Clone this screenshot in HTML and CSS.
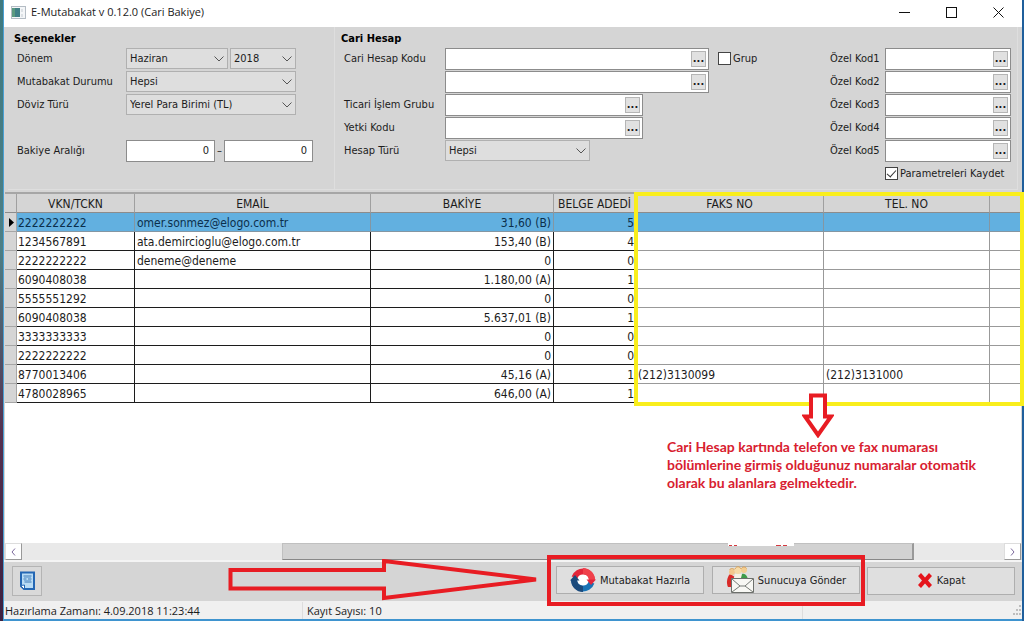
FILE: index.html
```html
<!DOCTYPE html>
<html lang="tr">
<head>
<meta charset="utf-8">
<title>E-Mutabakat v 0.12.0 (Cari Bakiye)</title>
<link rel="stylesheet" href="styles.css">
</head>
<body>
<div class="window">
  <header class="titlebar">
    <svg class="app-icon" width="15" height="13" viewBox="0 0 15 13"><rect x=".5" y=".5" width="14" height="12" fill="#f4f6f8" stroke="#b4bcc4"/><rect x="1" y="2" width="8" height="9" fill="#3f7f86"/><rect x="1" y="2" width="3" height="9" fill="#5b9a80"/><path d="M11 3v3M11 8v3" stroke="#c3cad0"/></svg>
    <h1 class="title">E-Mutabakat v 0.12.0 (Cari Bakiye)</h1>
    <div class="window-buttons">
      <button type="button" aria-label="Simge durumuna küçült"><svg width="11" height="11" viewBox="0 0 11 11"><path d="M0 5.5h11" stroke="#111" fill="none"/></svg></button>
      <button type="button" aria-label="Ekranı kapla"><svg width="11" height="11" viewBox="0 0 11 11"><rect x=".5" y=".5" width="10" height="10" stroke="#111" fill="none"/></svg></button>
      <button type="button" aria-label="Pencereyi kapat"><svg width="11" height="11" viewBox="0 0 11 11"><path d="M.5.5l10 10M10.500.5l-10 10" stroke="#111" fill="none"/></svg></button>
    </div>
  </header>

  <form class="params">
    <section class="group options">
      <h2>Seçenekler</h2>
      <div class="rows">
        <label for="month">Dönem</label>
        <div class="field">
          <span class="combo month"><select id="month"><option>Haziran</option></select><svg class="chevron" width="10" height="6" viewBox="0 0 10 6"><path d="M.5.5L5 5 9.500.5"/></svg></span>
          <span class="combo year"><select aria-label="Yıl"><option>2018</option></select><svg class="chevron" width="10" height="6" viewBox="0 0 10 6"><path d="M.5.5L5 5 9.500.5"/></svg></span>
        </div>
        <label for="state">Mutabakat Durumu</label>
        <div class="field"><span class="combo wide"><select id="state"><option>Hepsi</option></select><svg class="chevron" width="10" height="6" viewBox="0 0 10 6"><path d="M.5.5L5 5 9.500.5"/></svg></span></div>
        <label for="currency">Döviz Türü</label>
        <div class="field"><span class="combo wide"><select id="currency"><option>Yerel Para Birimi (TL)</option></select><svg class="chevron" width="10" height="6" viewBox="0 0 10 6"><path d="M.5.5L5 5 9.500.5"/></svg></span></div>
        <label class="last-row" for="min">Bakiye Aralığı</label>
        <div class="field last-row range"><input id="min" type="text" value="0"><span>–</span><input aria-label="Bakiye üst sınırı" type="text" value="0"></div>
      </div>
    </section>

    <section class="group account">
      <h2>Cari Hesap</h2>
      <div class="columns">
        <div class="rows">
          <label for="code">Cari Hesap Kodu</label>
          <div class="field"><span class="lookup long"><input id="code" type="text"><button type="button" aria-label="Kod seç">...</button></span><label class="check group-check"><input type="checkbox">Grup</label></div>
          <span></span>
          <div class="field"><span class="lookup long"><input aria-label="Cari Hesap Kodu bitiş" type="text"><button type="button" aria-label="Bitiş kodu seç">...</button></span></div>
          <label for="trade">Ticari İşlem Grubu</label>
          <div class="field"><span class="lookup medium"><input id="trade" type="text"><button type="button" aria-label="İşlem grubu seç">...</button></span></div>
          <label for="auth">Yetki Kodu</label>
          <div class="field"><span class="lookup medium"><input id="auth" type="text"><button type="button" aria-label="Yetki kodu seç">...</button></span></div>
          <label for="type">Hesap Türü</label>
          <div class="field"><span class="combo type"><select id="type"><option>Hepsi</option></select><svg class="chevron" width="10" height="6" viewBox="0 0 10 6"><path d="M.5.5L5 5 9.500.5"/></svg></span></div>
        </div>
        <div class="rows special">
          <label for="k1">Özel Kod1</label><div class="field"><span class="lookup short"><input id="k1" type="text"><button type="button" aria-label="Özel Kod1 seç">...</button></span></div>
          <label for="k2">Özel Kod2</label><div class="field"><span class="lookup short"><input id="k2" type="text"><button type="button" aria-label="Özel Kod2 seç">...</button></span></div>
          <label for="k3">Özel Kod3</label><div class="field"><span class="lookup short"><input id="k3" type="text"><button type="button" aria-label="Özel Kod3 seç">...</button></span></div>
          <label for="k4">Özel Kod4</label><div class="field"><span class="lookup short"><input id="k4" type="text"><button type="button" aria-label="Özel Kod4 seç">...</button></span></div>
          <label for="k5">Özel Kod5</label><div class="field"><span class="lookup short"><input id="k5" type="text"><button type="button" aria-label="Özel Kod5 seç">...</button></span></div>
          <span></span><label class="check"><input type="checkbox" checked>Parametreleri Kaydet</label>
        </div>
      </div>
    </section>
  </form>

  <main class="grid-area">
    <div class="table-wrap">
      <table>
        <colgroup><col class="c-mark"><col class="c-vkn"><col class="c-mail"><col class="c-bal"><col class="c-doc"><col class="c-fax"><col class="c-tel"><col></colgroup>
        <thead><tr><th></th><th>VKN/TCKN</th><th>EMAİL</th><th>BAKİYE</th><th class="tight">BELGE ADEDİ</th><th>FAKS NO</th><th>TEL. NO</th><th></th></tr></thead>
        <tbody>
          <tr class="selected"><td><svg class="marker" width="5" height="9" viewBox="0 0 5 9"><path d="M0 0l5 4.500-5 4.500z"/></svg></td><td>2222222222</td><td>omer.sonmez@elogo.com.tr</td><td>31,60 (B)</td><td>5</td><td></td><td></td><td></td></tr>
          <tr><td></td><td>1234567891</td><td>ata.demircioglu@elogo.com.tr</td><td>153,40 (B)</td><td>4</td><td></td><td></td><td></td></tr>
          <tr><td></td><td>2222222222</td><td>deneme@deneme</td><td>0</td><td>0</td><td></td><td></td><td></td></tr>
          <tr><td></td><td>6090408038</td><td></td><td>1.180,00 (A)</td><td>1</td><td></td><td></td><td></td></tr>
          <tr><td></td><td>5555551292</td><td></td><td>0</td><td>0</td><td></td><td></td><td></td></tr>
          <tr><td></td><td>6090408038</td><td></td><td>5.637,01 (B)</td><td>1</td><td></td><td></td><td></td></tr>
          <tr><td></td><td>3333333333</td><td></td><td>0</td><td>0</td><td></td><td></td><td></td></tr>
          <tr><td></td><td>2222222222</td><td></td><td>0</td><td>0</td><td></td><td></td><td></td></tr>
          <tr><td></td><td>8770013406</td><td></td><td>45,16 (A)</td><td>1</td><td>(212)3130099</td><td>(212)3131000</td><td></td></tr>
          <tr><td></td><td>4780028965</td><td></td><td>646,00 (A)</td><td>1</td><td></td><td></td><td></td></tr>
        </tbody>
      </table>
      <div class="highlight"></div>
      <div class="callout">
        <svg width="32" height="45" viewBox="0 0 32 45"><path d="M9 2.500h14v21h6L16 42 3 23.500h6z" fill="#fff" stroke="#e81c23" stroke-width="4"/></svg>
        <p>Cari Hesap kartında telefon ve fax numarası<br>bölümlerine girmiş olduğunuz numaralar otomatik<br>olarak bu alanlara gelmektedir.</p>
      </div>
    </div>
  </main>

  <div class="scrollbar">
    <button type="button" aria-label="Sola kaydır"><svg width="5" height="8" viewBox="0 0 5 8"><path d="M4 .5L1 4l3 3.500"/></svg></button>
    <div class="track"><div class="thumb"></div></div>
    <button type="button" aria-label="Sağa kaydır"><svg width="5" height="8" viewBox="0 0 5 8"><path d="M1 .5L4 4 1 7.500"/></svg></button>
    <svg class="patch" width="66" height="4" viewBox="0 0 66 4"><path d="M0 0h66v3H0z" fill="#fff"/><path d="M1 2.500h3M6 2.500h3M48 2.500h5M55 2.500h4" stroke="#d43a40"/></svg>
  </div>

  <footer class="actions">
    <button type="button" class="report" aria-label="Rapor">
      <svg width="17" height="20" viewBox="0 0 17 20"><path d="M2 1.500h13v16.500H5L2 15z" fill="#b9dcf5" stroke="#2467b4" stroke-width="2"/><path d="M4.500 5h8M4.500 8h3M9 8h3.500M5.500 11h7" stroke="#3f78b4"/><path d="M5 6.500h7M5 9.500h7" stroke="#7fb0dc"/><path d="M1.500 14.500l4-.5v4.500z" fill="#fff" stroke="#2467b4"/></svg>
    </button>
    <svg class="long-arrow" width="312" height="42" viewBox="0 0 312 42"><path d="M2.500 11H156V2l152 18.500L156 39v-9.500H2.500z" fill="none" stroke="#e81c23" stroke-width="4"/></svg>
    <div class="marked">
      <button type="button" class="action">
        <svg width="26" height="24" viewBox="0 0 26 24"><circle cx="13" cy="12" r="7" fill="#fff"/><g fill="none" stroke-width="6"><path d="M4.500 9.500A9 9 0 0 1 22 12" stroke="#e3263a"/><path d="M13 3A9 9 0 0 1 22 12" stroke="#f0404b"/><path d="M21.500 14.500A9 9 0 0 1 4 12" stroke="#1a73b5"/><path d="M13 21A9 9 0 0 1 4 12" stroke="#1b4a7c"/></g><path d="M16.500 11.500H26L21 17z" fill="#e3263a"/><path d="M0 12.500h9.500L5 7z" fill="#1b4a7c"/></svg>
        <span>Mutabakat Hazırla</span>
      </button>
      <button type="button" class="action">
        <svg width="28" height="28" viewBox="0 0 28 28"><path d="M4 8c-3 3-4 9-2 13h5l2-10z" fill="#d92a28"/><path d="M9 8h7l2 7H7z" fill="#f5f1e5"/><path d="M16 8c4-1 6 3 6 8h-8z" fill="#3e9b49"/><circle cx="6" cy="6" r="3" fill="#f3c88d"/><circle cx="12" cy="4.500" r="3.500" fill="#f6dba8"/><circle cx="18" cy="4" r="3" fill="#f3cd90"/><path d="M3.500 4c1-2 4-2 5 0M9 3c1-3 5-3 6 0M15.500 2.500c1-2 4-2 5 0" fill="none" stroke="#d9a259"/><path d="M5.500 12.500h22v14h-22z" fill="#f8f8f4" stroke="#6d706c"/><path d="M6 13l8 7h5l8-7M6 26l8-6M27 26l-8-6" fill="none" stroke="#777b76"/></svg>
        <span>Sunucuya Gönder</span>
      </button>
    </div>
    <button type="button" class="action close">
      <svg width="16" height="17" viewBox="0 0 16 17"><path d="M1 4l3-3 4 4.500L12 1l3 3-4 4.500 4 4.500-3 3-4-4.500L4 16l-3-3 4-4.500z" fill="#e5141b"/></svg>
      <span>Kapat</span>
    </button>
  </footer>

  <div class="status">
    <span class="prepared">Hazırlama Zamanı: 4.09.2018 11:23:44</span>
    <span class="count">Kayıt Sayısı: 10</span>
    <span class="rest"></span>
    <svg width="10" height="10" viewBox="0 0 10 10"><path d="M7 0h2v2H7zM4 4h2v2H4zM7 4h2v2H7zM1 8h2v2H1zM4 8h2v2H4zM7 8h2v2H7z" fill="#bdbdbd"/></svg>
  </div>
</div>
</body>
</html>
```

FILE: styles.css
```css
* { box-sizing: border-box; }

body {
  margin: 0;
  padding: 0 2px 0 3px;
  min-height: 100vh;
  display: flex;
  background: linear-gradient(90deg, transparent 50%, #1f5f9c 50%), linear-gradient(#3f7a80, #4d7f86 40%, #54304f 70%, #3c2140);
  font-family: "DejaVu Sans Condensed", "DejaVu Sans", sans-serif;
  font-size: 11px;
  color: #1c1c1c;
}

button, input, select { font: inherit; color: inherit; margin: 0; }
button { padding: 0; }
h1, h2, p { margin: 0; }

.window {
  flex: 1;
  min-width: 0;
  display: flex;
  flex-direction: column;
  background: #d5d5d5;
  border-left: 1px solid #4aa0d4;
  border-bottom: 2px solid #3f94cf;
}

/* Title bar */
.titlebar {
  display: flex;
  align-items: center;
  height: 27px;
  padding: 0 0 3px 7px;
  gap: 5px;
  background: #fff;
}
.title { flex: 1; font: 400 11px/20px "Open Sans", sans-serif; }
.window-buttons { display: flex; }
.window-buttons button {
  width: 47px;
  height: 24px;
  border: 0;
  background: none;
  display: grid;
  place-items: center;
}

/* Parameters */
.params { display: flex; height: 163px; padding: 0 4px 0 4px; }
.group { padding: 4px 0 0; border-right: 1px solid #dedede; border-bottom: 1px solid #dedede; }
.options { width: 327px; padding-left: 6px; }
.account { flex: 1; padding: 4px 6px 0 6px; }
.group h2 { font-size: 11px; line-height: 16px; font-weight: 700; color: #000; }
.rows {
  display: grid;
  grid-template-columns: 109px auto;
  grid-auto-rows: 23px;
  align-items: center;
  padding-left: 3px;
}
.account .rows { grid-template-columns: 101px auto; }
.account .special { grid-template-columns: 55px auto; padding: 0; }
.last-row { grid-row: 5; }
.columns { display: flex; justify-content: space-between; }
.field { display: flex; align-items: center; }
.options .field { gap: 2px; }

.combo { position: relative; display: flex; height: 21px; }
.combo select {
  width: 100%;
  appearance: none;
  border: 1px solid #b0b0b0;
  border-radius: 0;
  background: #dedede;
  padding: 0 18px 0 3px;
}
.chevron { position: absolute; right: 4px; top: 8px; fill: none; stroke: #555; pointer-events: none; }
.month { width: 102px; }
.year { width: 66px; }
.wide { width: 170px; }
.type { width: 145px; }

.range input {
  width: 89px;
  height: 22px;
  border: 1px solid #8c8c8c;
  background: #fff;
  text-align: right;
  padding: 0 5px;
}
.range span { width: 5px; text-align: center; }

.lookup {
  display: flex;
  align-items: center;
  height: 22px;
  padding-right: 2px;
  border: 1px solid #8c8c8c;
  background: #fff;
}
.lookup input { flex: 1; min-width: 0; border: 0; padding: 0 3px; background: none; }
.lookup button {
  width: 15px;
  height: 16px;
  border: 1px solid #b5b5b5;
  background: #e1e1e1;
  font-weight: 700;
  line-height: 12px;
}
.long { width: 264px; }
.medium { width: 198px; }
.short { width: 126px; }

.check { display: flex; align-items: center; gap: 2px; }
.group-check { padding-left: 9px; }
.check input {
  appearance: none;
  width: 13px;
  height: 13px;
  border: 1px solid #444;
  background: #fff;
  display: grid;
  place-items: center;
}
.check input:checked::before {
  content: "";
  width: 8px;
  height: 4px;
  margin-bottom: 3px;
  border-left: 1px solid #333;
  border-bottom: 1px solid #333;
  transform: rotate(-48deg);
}

/* Grid */
.grid-area { flex: 1; padding: 0 1px; border-top: 2px solid #d5d5d5; }
.table-wrap { position: relative; height: 100%; background: #fff; border-top: 2px solid #a6a6a6; }
table { width: 100%; table-layout: fixed; border-collapse: separate; border-spacing: 0; font-size: 12px; }
.c-mark { width: 12px; }
.c-vkn { width: 118px; }
.c-mail { width: 236px; }
.c-bal { width: 183px; }
.c-doc { width: 82px; }
.c-fax { width: 188px; }
.c-tel { width: 166px; }
th, td { height: 19px; padding: 2px 2px 0; line-height: 16px; white-space: nowrap; }
th {
  background: #d5d5d5;
  border-right: 1px solid #a0a0a0;
  border-bottom: 1px solid #8c8c8c;
  font-weight: 400;
}
th.tight { padding: 2px 0 0; }
td { border-right: 1px solid #1c1c1c; border-bottom: 1px solid #1c1c1c; }
td:nth-child(2) { padding-left: 1px; }
td:nth-child(n+5) { border-right-color: #999; }
td:nth-child(n+6) { border-bottom-color: #999; }
td:nth-child(4), td:nth-child(5) { text-align: right; }
td:nth-child(5) { padding-right: 1px; }
td:first-child { background: #d5d5d5; border-color: #a6a6a6; padding: 0 0 0 4px; }
td:last-child, th:last-child { border-right: 0; }
.selected td:nth-child(n+2) { background: #62b0e0; border-color: #8496a2; color: #0b2f4c; }
.marker { display: block; }

/* Notes drawn over the grid */
.highlight {
  position: absolute;
  left: 629px;
  right: -3px;
  top: -2px;
  height: 214px;
  border: 4px solid #f9ee1c;
}
.callout { position: absolute; left: 662px; top: 199px; color: #d8202f; }
.callout svg { display: block; margin-left: 135px; }
.callout p { font: 700 14px/18px Lato, sans-serif; white-space: nowrap; }

/* Scroll bar */
.scrollbar { position: relative; display: flex; height: 17px; background: #e9e9e9; margin: 0 1px; }
.scrollbar button {
  width: 17px;
  border: 1px solid #ddd;
  border-right-color: #999;
  border-bottom-color: #999;
  background: #fff;
  display: grid;
  place-items: center;
}
.scrollbar button path { fill: none; stroke: #7c6a9c; }
.track { flex: 1; display: grid; grid-template-columns: 260fr 632fr 90fr; }
.thumb { grid-column: 2; background: #d2d2d2; border: 1px solid #c0c0c0; border-right: 2px solid #999; border-bottom-color: #888; }
.patch { position: absolute; left: 723px; top: 0; }

/* Actions */
.actions {
  position: relative;
  display: flex;
  align-items: center;
  height: 41px;
  padding: 0 7px 2px 8px;
  border-top: 2px solid #f4f4f4;
}
.report { width: 30px; height: 30px; display: grid; place-items: center; border: 1px solid #b4b4b4; background: #d9d9d9; }
.long-arrow { position: absolute; left: 224px; top: -3px; }
.marked {
  display: flex;
  gap: 8px;
  margin: -9px 2px -9px auto;
  padding: 7px 1px 8px 5px;
  border: 4px solid #e81c23;
  z-index: 1;
}
.action {
  width: 148px;
  height: 28px;
  display: flex;
  align-items: center;
  justify-content: center;
  gap: 4px;
  border: 1px solid #aeaeae;
  background: #dfdfdf;
}
.action svg { flex: none; }

/* Status bar */
.status {
  display: flex;
  align-items: center;
  height: 18px;
  background: #f0f0f0;
  font: 400 11px/17px "Open Sans", sans-serif;
}
.prepared { width: 299px; padding-left: 1px; border-right: 1px solid #ddd; }
.count { width: 500px; padding-left: 4px; border-right: 1px solid #ddd; }
.rest { flex: 1; }
```
